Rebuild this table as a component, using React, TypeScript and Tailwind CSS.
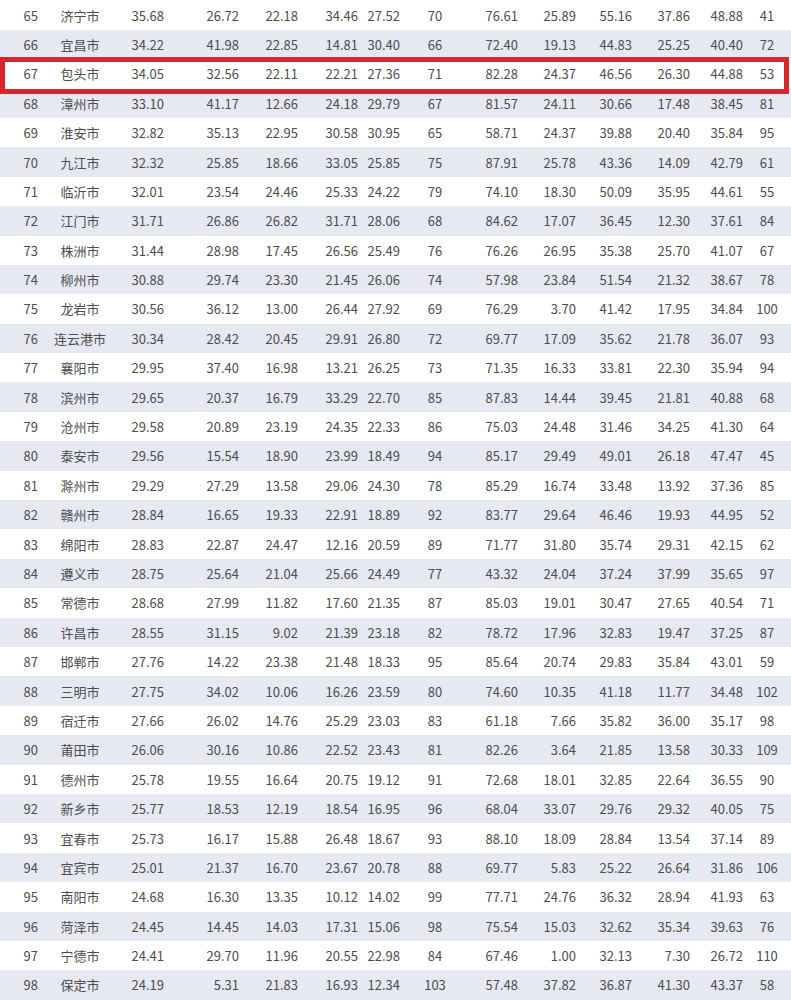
const rows: string[] = [
  '65 济宁市 35.68 26.72 22.18 34.46 27.52 70 76.61 25.89 55.16 37.86 48.88 41',
  '66 宜昌市 34.22 41.98 22.85 14.81 30.40 66 72.40 19.13 44.83 25.25 40.40 72',
  '67 包头市 34.05 32.56 22.11 22.21 27.36 71 82.28 24.37 46.56 26.30 44.88 53',
  '68 漳州市 33.10 41.17 12.66 24.18 29.79 67 81.57 24.11 30.66 17.48 38.45 81',
  '69 淮安市 32.82 35.13 22.95 30.58 30.95 65 58.71 24.37 39.88 20.40 35.84 95',
  '70 九江市 32.32 25.85 18.66 33.05 25.85 75 87.91 25.78 43.36 14.09 42.79 61',
  '71 临沂市 32.01 23.54 24.46 25.33 24.22 79 74.10 18.30 50.09 35.95 44.61 55',
  '72 江门市 31.71 26.86 26.82 31.71 28.06 68 84.62 17.07 36.45 12.30 37.61 84',
  '73 株洲市 31.44 28.98 17.45 26.56 25.49 76 76.26 26.95 35.38 25.70 41.07 67',
  '74 柳州市 30.88 29.74 23.30 21.45 26.06 74 57.98 23.84 51.54 21.32 38.67 78',
  '75 龙岩市 30.56 36.12 13.00 26.44 27.92 69 76.29 3.70 41.42 17.95 34.84 100',
  '76 连云港市 30.34 28.42 20.45 29.91 26.80 72 69.77 17.09 35.62 21.78 36.07 93',
  '77 襄阳市 29.95 37.40 16.98 13.21 26.25 73 71.35 16.33 33.81 22.30 35.94 94',
  '78 滨州市 29.65 20.37 16.79 33.29 22.70 85 87.83 14.44 39.45 21.81 40.88 68',
  '79 沧州市 29.58 20.89 23.19 24.35 22.33 86 75.03 24.48 31.46 34.25 41.30 64',
  '80 泰安市 29.56 15.54 18.90 23.99 18.49 94 85.17 29.49 49.01 26.18 47.47 45',
  '81 滁州市 29.29 27.29 13.58 29.06 24.30 78 85.29 16.74 33.48 13.92 37.36 85',
  '82 赣州市 28.84 16.65 19.33 22.91 18.89 92 83.77 29.64 46.46 19.93 44.95 52',
  '83 绵阳市 28.83 22.87 24.47 12.16 20.59 89 71.77 31.80 35.74 29.31 42.15 62',
  '84 遵义市 28.75 25.64 21.04 25.66 24.49 77 43.32 24.04 37.24 37.99 35.65 97',
  '85 常德市 28.68 27.99 11.82 17.60 21.35 87 85.03 19.01 30.47 27.65 40.54 71',
  '86 许昌市 28.55 31.15 9.02 21.39 23.18 82 78.72 17.96 32.83 19.47 37.25 87',
  '87 邯郸市 27.76 14.22 23.38 21.48 18.33 95 85.64 20.74 29.83 35.84 43.01 59',
  '88 三明市 27.75 34.02 10.06 16.26 23.59 80 74.60 10.35 41.18 11.77 34.48 102',
  '89 宿迁市 27.66 26.02 14.76 25.29 23.03 83 61.18 7.66 35.82 36.00 35.17 98',
  '90 莆田市 26.06 30.16 10.86 22.52 23.43 81 82.26 3.64 21.85 13.58 30.33 109',
  '91 德州市 25.78 19.55 16.64 20.75 19.12 91 72.68 18.01 32.85 22.64 36.55 90',
  '92 新乡市 25.77 18.53 12.19 18.54 16.95 96 68.04 33.07 29.76 29.32 40.05 75',
  '93 宜春市 25.73 16.17 15.88 26.48 18.67 93 88.10 18.09 28.84 13.54 37.14 89',
  '94 宜宾市 25.01 21.37 16.70 23.67 20.78 88 69.77 5.83 25.22 26.64 31.86 106',
  '95 南阳市 24.68 16.30 13.35 10.12 14.02 99 77.71 24.76 36.32 28.94 41.93 63',
  '96 菏泽市 24.45 14.45 14.03 17.31 15.06 98 75.54 15.03 32.62 35.34 39.63 76',
  '97 宁德市 24.41 29.70 11.96 20.55 22.98 84 67.46 1.00 32.13 7.30 26.72 110',
  '98 保定市 24.19 5.31 21.83 16.93 12.34 103 57.48 37.82 36.87 41.30 43.37 58',
]

// alignment per column: rank | city | 5 scores | rank | 5 scores | rank
const align = [
  'text-right pr-[12px]',
  'text-center',
  'text-right',
  'text-right',
  'text-right',
  'text-right',
  'text-right',
  'text-center',
  'text-right',
  'text-right',
  'text-right',
  'text-right',
  'text-right',
  'text-center',
]

function Row({ line, index }: { line: string; index: number }) {
  const cells = line.split(' ')
  return (
    <div
      className={
        'grid grid-cols-[50px_60px_54px_75px_59px_60px_42px_70px_48px_58px_56px_58px_53px_48px] items-center h-[29.4px] ' +
        (index % 2 === 0 ? 'bg-white' : 'bg-[#e6e8f2]')
      }
    >
      {cells.map((c, i) => (
        <div key={i} className={'whitespace-nowrap ' + align[i]}>
          {c}
        </div>
      ))}
    </div>
  )
}

export default function App() {
  return (
    <div
      className="relative w-[791px] h-[1000px] overflow-hidden bg-white pt-[0.4px] text-[13px] leading-none text-[#4d4d4f]"
      style={{ fontFamily: '"Noto Sans CJK SC", "Noto Sans", sans-serif' }}
    >
      {rows.map((r, i) => (
        <Row key={i} line={r} index={i} />
      ))}

      {/* highlight box around 包头市 */}
      <div className="absolute left-0 top-[57px] w-[789px] h-[37px] border-[5px] border-[#d8262e]" />
    </div>
  )
}
